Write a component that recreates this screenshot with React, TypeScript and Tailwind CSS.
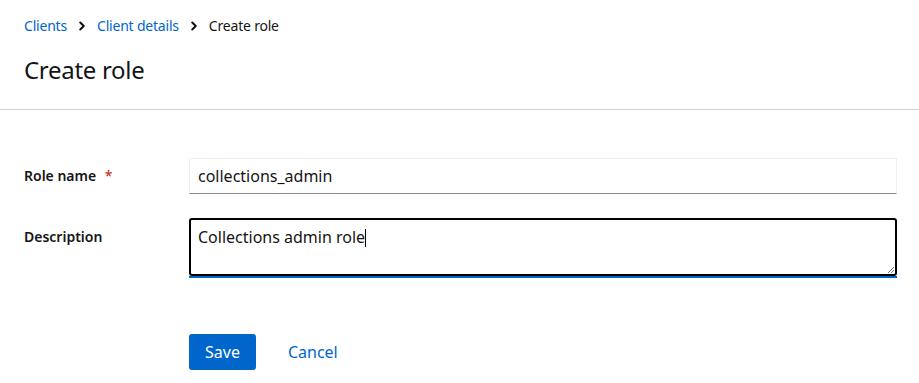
import { ChevronRight } from "lucide-react";

const font = { fontFamily: '"Noto Sans", "Liberation Sans", sans-serif' };

const Crumbs = () => {
  return (
    <nav className="flex items-center text-sm h-5 text-[#151515] tracking-[-0.2px]">
      <a className="text-[#0066cc]">Clients</a>
      <ChevronRight size={14} strokeWidth={3.5} className="mx-[8px] text-[#151515]" />
      <a className="text-[#0066cc]">Client details</a>
      <ChevronRight size={14} strokeWidth={3.5} className="mx-[8px] text-[#151515]" />
      <span>Create role</span>
    </nav>
  );
};

const App = () => {
  return (
    <div style={font} className="w-[919px] h-[383px] bg-white overflow-hidden text-[#151515]">
      <div className="px-6 pt-4 pb-6 border-b border-[#d2d2d2]">
        <Crumbs />
        <h1 className="mt-[19px] text-2xl leading-[30px] tracking-[-0.3px]">Create role</h1>
      </div>

      <div className="pl-6 pr-[22px] pt-12">
        <div className="grid grid-cols-[165px_1fr] items-center">
          <label className="text-sm font-semibold">
            Role name <span className="ml-[5px] font-normal text-[#c9190b]">*</span>
          </label>
          <div className="h-9 flex items-center px-2 border border-[#f0f0f0] border-b-[#8a8d90] text-base">
            collections_admin
          </div>
        </div>

        <div className="grid grid-cols-[165px_1fr] items-start mt-6">
          <label className="text-sm font-semibold pt-[9px]">Description</label>
          <div className="flex flex-col">
            <div className="relative h-[58px] border-2 border-black rounded-[3px] px-[7px] pt-[5px] text-base leading-6">
              Collections admin role
              <span className="inline-block w-px h-[18px] bg-black align-middle -mt-[2px]" />
              <svg className="absolute right-0 bottom-0" width="8" height="8" viewBox="0 0 8 8">
                <path d="M7 1L1 7M7 4L4 7" stroke="#777" strokeWidth="1" />
              </svg>
            </div>
            <div className="h-[2px] bg-[#0066cc]" />
          </div>
        </div>

        <div className="grid grid-cols-[165px_1fr] mt-[56px]">
          <div />
          <div className="flex items-center gap-8">
            <button className="h-9 px-4 bg-[#0066cc] text-white text-base rounded-[3px]">Save</button>
            <button className="text-base text-[#0066cc]">Cancel</button>
          </div>
        </div>
      </div>
    </div>
  );
};

export default App;
